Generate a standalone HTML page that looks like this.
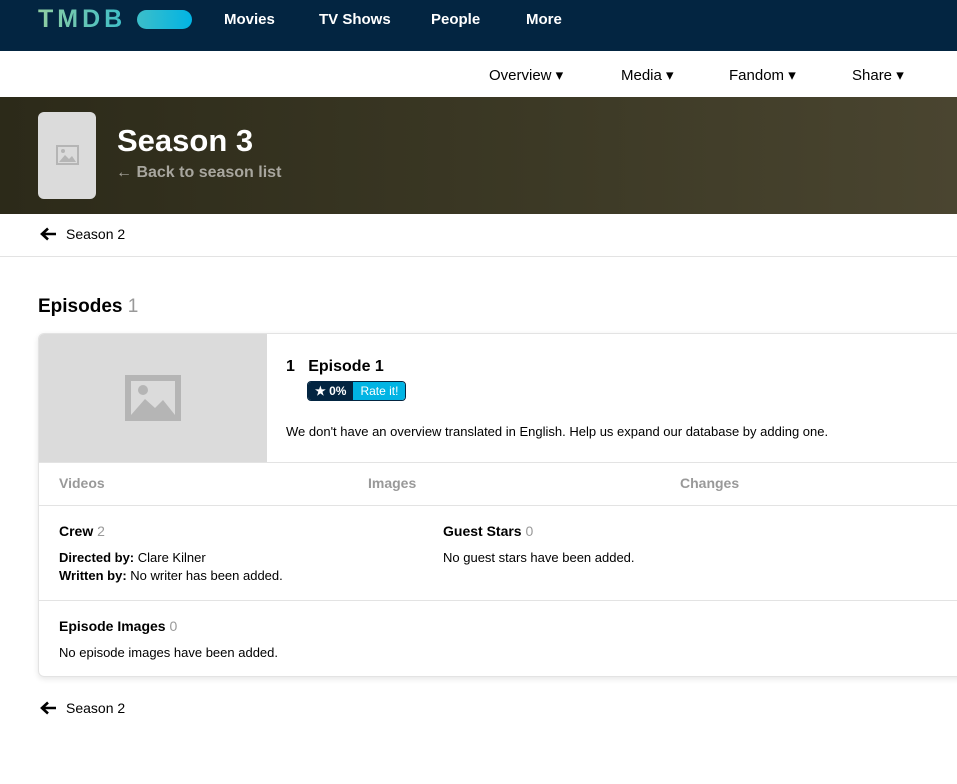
<!DOCTYPE html>
<html><head><style>
*{margin:0;padding:0;box-sizing:border-box}
body{width:957px;height:784px;overflow:hidden;background:#fff;font-family:"Liberation Sans",sans-serif;color:#000;position:relative}
.top{height:51px;background:#032541;position:relative}
.logo{position:absolute;left:38px;top:5px;font-size:25px;font-weight:bold;letter-spacing:4px;background:linear-gradient(90deg,#90cea1,#3cbec9);-webkit-background-clip:text;color:transparent}
.pill{position:absolute;left:137px;top:10px;width:55px;height:19px;border-radius:10px;background:linear-gradient(90deg,#3cbec9,#01b4e4)}
.nav a{position:absolute;top:11px;color:#fff;font-weight:bold;font-size:15px;text-decoration:none}
.sub span{position:absolute;top:66px;font-size:15px;color:#000}
.hero{position:absolute;top:97px;left:0;width:957px;height:117px;background:linear-gradient(90deg,#2c2a19,#3d3a26 60%,#4a4530)}
.post{position:absolute;left:38px;top:15px;width:58px;height:87px;background:#dbdbdb;border-radius:6px}
h1{position:absolute;left:117px;top:26px;color:#fff;font-size:31px;font-weight:bold}
.back{position:absolute;left:116px;top:67px;color:#a8a69e;font-weight:bold;font-size:16px}
.s2{position:absolute;left:40px;font-size:14px;display:flex;align-items:center}
.s2 svg{margin-right:9px}
.hr{position:absolute;left:0;width:957px;height:1px;background:#e3e3e3}
.card{position:absolute;left:38px;top:333px;width:930px;height:344px;border:1px solid #e3e3e3;border-radius:6px;box-shadow:0 2px 6px rgba(0,0,0,.1);overflow:hidden}
.img{position:absolute;left:0;top:0;width:228px;height:128px;background:#dbdbdb}
.t{position:absolute;font-size:13px}
.g{color:#999;font-weight:normal}
</style></head><body>
<div class="top"><div class="logo">TMDB</div><div class="pill"></div>
<div class="nav"><a style="left:224px">Movies</a><a style="left:319px">TV Shows</a><a style="left:431px">People</a><a style="left:526px">More</a></div></div>
<div class="sub"><span style="left:489px">Overview ▾</span><span style="left:621px">Media ▾</span><span style="left:729px">Fandom ▾</span><span style="left:852px">Share ▾</span></div>
<div class="hero"><div class="post"><svg style="position:absolute;left:18px;top:33px" width="23" height="20" viewBox="0 0 23 20"><rect x="1" y="1" width="21" height="18" fill="none" stroke="#b5b5b5" stroke-width="2"/><circle cx="7" cy="6" r="2" fill="#b5b5b5"/><path d="M3 17 L9 10 L13 14 L16 11 L20 17Z" fill="#b5b5b5"/></svg></div><h1>Season 3</h1><div class="back">← Back to season list</div></div>
<div class="s2" style="top:226px"><svg width="17" height="14" viewBox="0 0 17 14"><path d="M16 7H3M8 1.5L2 7l6 5.5" fill="none" stroke="#000" stroke-width="2.6"/></svg>Season 2</div>
<div class="hr" style="top:256px"></div>
<div style="position:absolute;left:38px;top:296px;font-size:19px;font-weight:bold">Episodes <span class="g">1</span></div>
<div class="card">
<div class="img"><svg style="position:absolute;left:86px;top:41px" width="56" height="46" viewBox="0 0 56 46"><rect x="3" y="3" width="50" height="40" fill="none" stroke="#b5b5b5" stroke-width="6"/><circle cx="18" cy="15" r="5" fill="#b5b5b5"/><path d="M6 40 L20 24 L30 33 L38 25 L50 40Z" fill="#b5b5b5"/></svg></div>
<div class="t" style="left:247px;top:24px;font-size:16px;font-weight:bold">1&nbsp;&nbsp;&nbsp;Episode 1</div>
<div style="position:absolute;left:268px;top:47px;height:20px;border:1px solid #032541;border-radius:4px;overflow:hidden;font-size:12px;display:flex">
<span style="background:#032541;color:#fff;padding:2px 7px;font-weight:bold">★ 0%</span><span style="background:#01b4e4;color:#fff;padding:2px 7px">Rate it!</span></div>
<div class="t" style="left:247px;top:90px">We don't have an overview translated in English. Help us expand our database by adding one.</div>
<div class="hr" style="top:128px;width:930px"></div>
<div class="t g" style="left:20px;top:141px;font-size:14px;font-weight:bold">Videos</div>
<div class="t g" style="left:329px;top:141px;font-size:14px;font-weight:bold">Images</div>
<div class="t g" style="left:641px;top:141px;font-size:14px;font-weight:bold">Changes</div>
<div class="hr" style="top:171px;width:930px"></div>
<div class="t" style="left:20px;top:189px;font-size:14px;font-weight:bold">Crew <span class="g">2</span></div>
<div class="t" style="left:20px;top:216px"><b>Directed by:</b> Clare Kilner</div>
<div class="t" style="left:20px;top:234px"><b>Written by:</b> No writer has been added.</div>
<div class="t" style="left:404px;top:189px;font-size:14px;font-weight:bold">Guest Stars <span class="g">0</span></div>
<div class="t" style="left:404px;top:216px">No guest stars have been added.</div>
<div class="hr" style="top:266px;width:930px"></div>
<div class="t" style="left:20px;top:284px;font-size:14px;font-weight:bold">Episode Images <span class="g">0</span></div>
<div class="t" style="left:20px;top:311px">No episode images have been added.</div>
</div>
<div class="s2" style="top:700px"><svg width="17" height="14" viewBox="0 0 17 14"><path d="M16 7H3M8 1.5L2 7l6 5.5" fill="none" stroke="#000" stroke-width="2.6"/></svg>Season 2</div>
</body></html>
